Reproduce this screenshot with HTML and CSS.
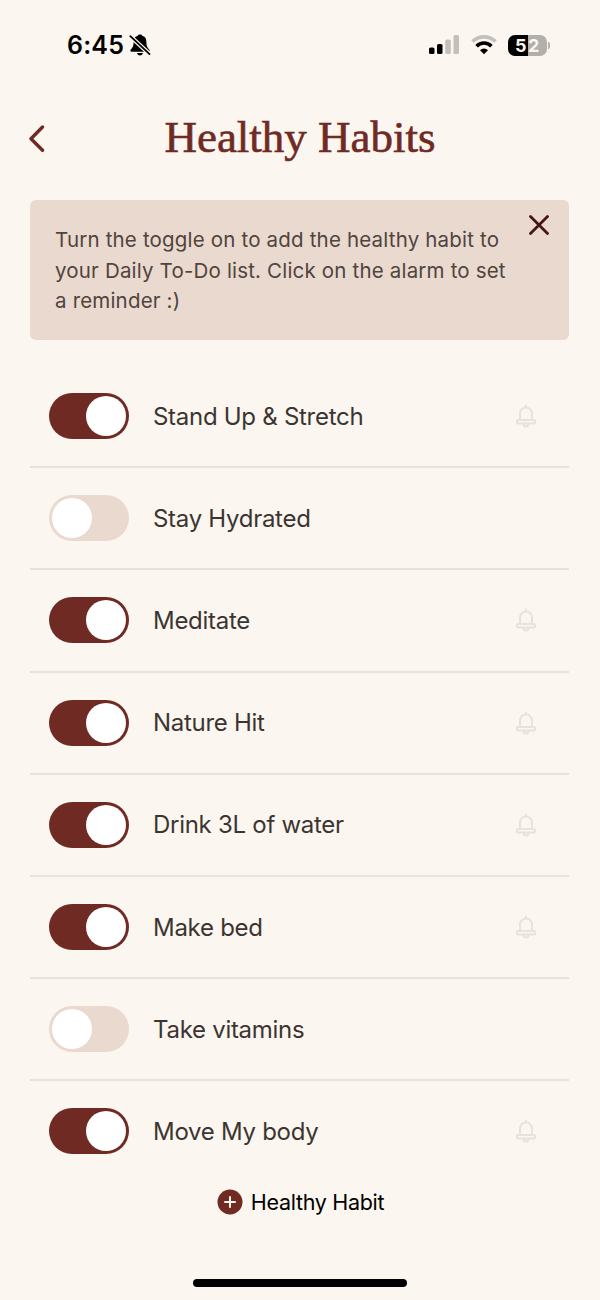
FILE: index.html
```html
<!DOCTYPE html>
<html lang="en">
<head>
  <meta charset="UTF-8" />
  <meta name="viewport" content="width=device-width, initial-scale=1.0"/>
  <title>Healthy Habits</title>
  <link rel="stylesheet" href="styles.css">
</head>
<body>
  <div class="status-bar">
    <div class="status-left">
      <span class="time">6:45</span>
      <svg class="mute-icon" viewBox="0 0 22 24" width="22" height="24">
        <path d="M11 1.500c-1.200 0-2 .5-2.200 1.200C5.500 3.500 4.600 6 4.600 9.200c0 4.300-1.200 5.500-2.800 7.300-.8.900-.4 2.300.9 2.300h16.600c1.300 0 1.700-1.400.9-2.300-1.600-1.800-2.800-3-2.800-7.300 0-3.200-.9-5.700-4.200-6.500C13 2 12.200 1.500 11 1.500zM8 20h6c-.3 1.500-1.500 2.400-3 2.400S8.300 21.500 8 20z"/>
        <path class="mute-gap" d="M1 3l19.500 18"/>
        <path class="mute-slash" d="M1.300 3.200l19.200 17.900"/>
      </svg>
    </div>
    <div class="status-right">
      <svg class="signal-icon" viewBox="0 0 31 20" width="31" height="20">
        <rect x="0" y="12.500" width="5.500" height="6.500" rx="1.600"/>
        <rect x="8" y="9" width="5.500" height="10" rx="1.600"/>
        <rect class="dim" x="16.300" y="4.500" width="5.500" height="14.500" rx="1.600"/>
        <rect class="dim" x="24.500" y="0" width="5.500" height="19" rx="1.600"/>
      </svg>
      <svg class="wifi-icon" viewBox="0 0 26 20" width="26" height="20">
        <path class="wifi-arc dim-arc" d="M1.500 6.500a16.500 16.500 0 0 1 23 0"/>
        <path class="wifi-arc" d="M5.600 11.200a10.300 10.300 0 0 1 14.800 0"/>
        <path d="M13 19.300l-4-4.100a5.800 5.800 0 0 1 8 0z"/>
      </svg>
      <div class="battery"><span class="battery-level">5</span><span>2</span></div>
    </div>
  </div>

  <header>
    <button class="back-button" aria-label="Back">
      <svg viewBox="0 0 18 28" width="18" height="28"><path d="M14.500 3L3 14.700l11.500 11.500"/></svg>
    </button>
    <h1>Healthy Habits</h1>
  </header>

  <main>
    <section class="tip">
      <p>Turn the toggle on to add the healthy habit to<br>your Daily To-Do list. Click on the alarm to set<br>a reminder :)</p>
      <button class="close-button" aria-label="Close">
        <svg viewBox="0 0 20 20" width="20" height="20"><path d="M1.500 1.500l17 17M18.500 1.500l-17 17"/></svg>
      </button>
    </section>

    <ul class="habit-list" id="habitList">
      <!-- Rows are added by the script below -->
    </ul>

    <button class="add-button">
      <svg viewBox="0 0 26 26" width="26" height="26">
        <circle cx="13" cy="13" r="12.500"/>
        <path d="M13 8v10M8 13h10"/>
      </svg>
      <span>Healthy Habit</span>
    </button>
  </main>

  <div class="home-indicator"></div>

  <script>
    const habits = [
      { title: 'Stand Up & Stretch', on: true },
      { title: 'Stay Hydrated', on: false },
      { title: 'Meditate', on: true },
      { title: 'Nature Hit', on: true },
      { title: 'Drink 3L of water', on: true },
      { title: 'Make bed', on: true },
      { title: 'Take vitamins', on: false },
      { title: 'Move My body', on: true }
    ];

    const bell = `
      <svg class="bell" viewBox="0 0 20 24" width="20" height="24">
        <path d="M10 1.500v1.500M4 15.500V9.500a6 6 0 0 1 12 0V15.500M2.500 16h15a1.500 1.500 0 0 1 0 3.500h-15a1.500 1.500 0 0 1 0-3.500zM7.500 20a2.500 2.500 0 0 0 5 0"/>
      </svg>`;

    document.getElementById('habitList').innerHTML = habits.map(habit => `
      <li class="habit">
        <span class="toggle ${habit.on ? 'toggle-on' : ''}"></span>
        <span class="habit-title">${habit.title.replace('&', '&amp;')}</span>
        ${habit.on ? bell : ''}
      </li>
    `).join('');
  </script>
</body>
</html>
```
FILE: styles.css
```css
* {
    margin: 0;
    padding: 0;
    box-sizing: border-box;
}
body {
    display: flex;
    flex-direction: column;
    height: 1300px;
    font-family: Inter, "Liberation Sans", sans-serif;
    background-color: #fbf6ef;
    color: #3b3532;
    overflow: hidden;
}
button {
    background: none;
    border: none;
    font-family: inherit;
    cursor: pointer;
}
svg {
    display: block;
}
.status-bar {
    display: flex;
    align-items: center;
    justify-content: space-between;
    height: 90px;
    padding: 0 53px 0 67px;
    color: #000;
}
.status-left,
.status-right {
    display: flex;
    align-items: center;
}
.status-left {
    gap: 5px;
}
.time {
    font-size: 25px;
    font-weight: 600;
    letter-spacing: 0.2px;
}
.mute-gap,
.mute-slash {
    fill: none;
    stroke: #fbf6ef;
    stroke-width: 4.4;
}
.mute-slash {
    stroke: #000;
    stroke-width: 1.8;
    stroke-linecap: round;
}
.signal-icon {
    margin-right: 11px;
}
.wifi-icon {
    margin-right: 11px;
}
.dim {
    fill: #c4bfba;
}
.wifi-arc {
    fill: none;
    stroke: #000;
    stroke-width: 3.6;
}
.dim-arc {
    stroke: #c4bfba;
}
.battery {
    position: relative;
    display: flex;
    align-items: center;
    width: 39px;
    height: 21px;
    border-radius: 7px;
    background: linear-gradient(to right, #000 20px, #b3afab 20px);
    color: #fbf6ef;
    font-size: 18px;
    font-weight: 700;
    line-height: 21px;
}
.battery-level {
    width: 20px;
    padding-left: 7px;
}
.battery::after {
    content: "";
    position: absolute;
    right: -3px;
    top: 7px;
    width: 2px;
    height: 7px;
    border-radius: 0 2px 2px 0;
    background: #b3afab;
}
header {
    display: grid;
    grid-template-columns: 60px 1fr 60px;
    align-items: center;
    height: 96px;
}
.back-button {
    padding-left: 28px;
}
.back-button path {
    fill: none;
    stroke: #702a24;
    stroke-width: 3.4;
    stroke-linecap: round;
    stroke-linejoin: round;
}
header h1 {
    font-family: "Liberation Serif", serif;
    font-size: 45px;
    font-weight: 400;
    line-height: 60px;
    margin-top: -3px;
    text-align: center;
    white-space: nowrap;
    color: #702a24;
    -webkit-text-stroke: 0.6px #702a24;
}
main {
    padding: 14px 31px 0 30px;
}
.tip {
    display: flex;
    justify-content: space-between;
    align-items: flex-start;
    height: 140px;
    padding: 25px 20px 0 25px;
    border-radius: 6px;
    background: #ead9ce;
}
.tip p {
    font-size: 20.5px;
    line-height: 30.5px;
    letter-spacing: 0.18px;
    white-space: nowrap;
    color: #50443e;
}
.close-button {
    margin-top: -10px;
}
.close-button path {
    fill: none;
    stroke: #451511;
    stroke-width: 2.8;
    stroke-linecap: round;
}
.habit-list {
    padding-top: 26px;
    list-style: none;
}
.habit {
    display: flex;
    align-items: center;
    height: 102.2px;
    padding: 0 33px 0 19px;
    border-bottom: 2px solid #e9e1dc;
}
.habit:last-child {
    border-bottom-color: transparent;
}
.toggle {
    display: flex;
    width: 79.5px;
    height: 46px;
    margin-right: 24.5px;
    padding: 3px;
    border-radius: 23px;
    background: #ead9ce;
}
.toggle::before {
    content: "";
    width: 40px;
    height: 40px;
    border-radius: 50%;
    background: #fff;
}
.toggle-on {
    justify-content: flex-end;
    background: #702a24;
}
.habit-title {
    font-size: 24px;
    letter-spacing: -0.28px;
}
.bell {
    margin-left: auto;
}
.bell path {
    fill: none;
    stroke: #e9e1dc;
    stroke-width: 2;
    stroke-linecap: round;
}
.add-button {
    display: flex;
    align-items: center;
    gap: 8px;
    margin: 5px auto 0;
    padding-left: 2px;
    font-size: 21.5px;
    letter-spacing: -0.3px;
    color: #000;
}
.add-button circle {
    fill: #702a24;
}
.add-button path {
    fill: none;
    stroke: #fbf6ef;
    stroke-width: 2;
    stroke-linecap: round;
}
.home-indicator {
    width: 214px;
    height: 8px;
    margin: auto auto 13px;
    border-radius: 4px;
    background: #000;
}
```
